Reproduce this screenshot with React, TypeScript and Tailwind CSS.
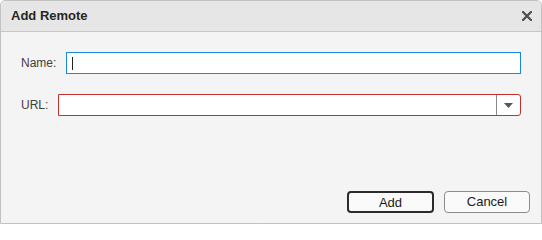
export default function App() {
  return (
    <div
      className="w-[542px] h-[224px] flex flex-col border border-[#c2c2c2] rounded-t-[5px] overflow-hidden bg-[#f4f4f4] text-[#333]"
      style={{ fontFamily: '"Liberation Sans", Arial, sans-serif' }}
    >
      {/* Title bar */}
      <div className="h-[31px] shrink-0 flex items-center justify-between pl-[10px] pr-[9px] bg-[#e6e6e6] border-b border-[#c6c6c6]">
        <span className="text-[13px] font-bold text-[#262626]">Add Remote</span>
        <svg width="10" height="10" viewBox="0 0 10 10">
          <path d="M1 1 L9 9 M9 1 L1 9" stroke="#4d4d4d" strokeWidth="2.2" strokeLinecap="square" />
        </svg>
      </div>

      {/* Body */}
      <div className="flex-1 flex flex-col pt-[20px] pl-[20px] pr-[20px] pb-[10px]">
        <div className="flex items-center gap-[10px] h-[22px]">
          <label className="text-[12px] text-[#404040]">Name:</label>
          <div className="flex-1 h-[22px] bg-white border border-[#1a88e0] flex items-center pl-[5px]">
            <span className="w-px h-[13px] bg-[#222]" />
          </div>
        </div>

        <div className="flex items-center gap-[10px] h-[22px] mt-[20px]">
          <label className="text-[12px] text-[#404040]">URL:</label>
          <div className="flex-1 h-[22px] bg-white border border-[#c4302b] rounded-r-[3px] flex">
            <div className="flex-1" />
            <div className="w-[24px] border-l border-[#8a8a8a] flex items-center justify-center">
              <svg width="9" height="5" viewBox="0 0 9 5">
                <path d="M0 0 L9 0 L4.5 5 Z" fill="#555" />
              </svg>
            </div>
          </div>
        </div>

        <div className="flex-1" />

        <div className="flex justify-end gap-[10px] -mr-[9px]">
          <button className="w-[87px] h-[22px] rounded-[4px] border-2 border-[#2b2b2b] bg-[#fafafa] text-[13px] text-[#1a1a1a]">
            Add
          </button>
          <button className="w-[86px] h-[22px] rounded-[4px] border border-[#8c8c8c] bg-[#fafafa] text-[13px] text-[#1a1a1a]">
            Cancel
          </button>
        </div>
      </div>
    </div>
  );
}
